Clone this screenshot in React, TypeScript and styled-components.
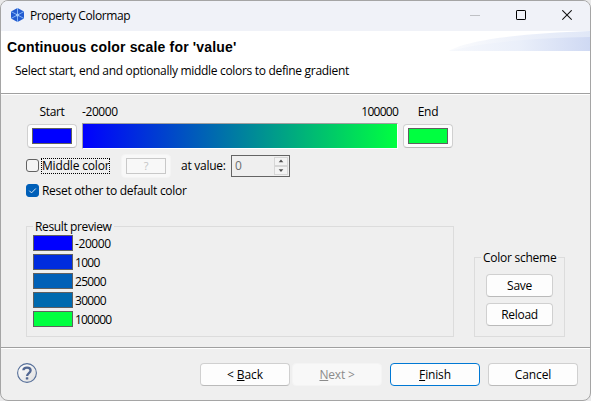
import React from "react";
import styled, { createGlobalStyle } from "styled-components";

const GlobalStyle = createGlobalStyle`
  * { box-sizing: border-box; }
  body { margin: 0; background: #e9e9ea; overflow: hidden; }
  button { padding: 0; margin: 0; }
`;

const Dialog = styled.div`
  width: 591px;
  height: 401px;
  border: 1px solid #a5a5a5;
  border-radius: 8px;
  background: #efefef;
  overflow: hidden;
  display: flex;
  flex-direction: column;
  color: #000;
  font: 12px/16px "Open Sans", "Noto Sans", sans-serif;
`;

const Label = styled.span<{ $ls?: number }>`
  display: inline-block;
  height: 16px;
  line-height: 18px;
  vertical-align: top;
  white-space: pre;
  letter-spacing: ${(p) => p.$ls ?? -0.3}px;
`;

const TitleBar = styled.div`
  height: 30px;
  flex: none;
  background: #f0f2f8;
  display: flex;
  align-items: flex-start;
  padding: 6px 0 0 9px;
`;

const TitleText = styled(Label)`
  flex: 1;
  margin-left: 5px;
`;

const WindowControls = styled.div`
  display: flex;
  gap: 36px;
  padding: 3px 18px 0 0;
  svg { display: block; }
`;

const Header = styled.header`
  position: relative;
  height: 64px;
  flex: none;
  background: #fff;
  border-bottom: 1px solid #fff;
  box-shadow: inset 0 -1px #a0a0a0;
  padding: 8px 6px 0;
`;

const Heading = styled.h1`
  margin: 0 0 7px;
  font: bold 14px/16px "Liberation Sans", Arial, sans-serif;
  letter-spacing: 0.17px;
`;

const Description = styled(Label)`
  display: block;
  margin-left: 8px;
`;

const Swoosh = styled.svg`
  position: absolute;
  top: 0;
  right: 0;
`;

const Body = styled.main`
  flex: 1;
  padding: 8px 25px 0;
`;

const ScaleGrid = styled.div`
  display: grid;
  grid-template-columns: 50px 316px 50px;
  column-gap: 5px;
  row-gap: 4px;
  align-items: start;
  text-align: center;
  margin-left: 1px;
`;

const RangeLabels = styled.div`
  display: flex;
  justify-content: space-between;
`;

const GradientBar = styled.div`
  height: 26px;
  border: 1px solid;
  border-color: #a0a0a0 #fff #fff #a0a0a0;
  background: linear-gradient(90deg, #0000ff, #00ff40);
`;

const PushButton = styled.button<{ $w: number; $default?: boolean }>`
  width: ${(p) => p.$w}px;
  height: 23px;
  padding-top: 2px;
  display: flex;
  justify-content: center;
  align-items: flex-start;
  border: 1px solid ${(p) => (p.$default ? "#0078d4" : "#d0d0d0")};
  border-bottom-color: ${(p) => (p.$default ? "#0078d4" : "#bababa")};
  border-radius: 4px;
  background: #fdfdfd;
  color: #000;
  font: inherit;
  &:disabled {
    background: #f8f8f8;
    border-color: #f4f4f4;
    color: #8b8b8b;
  }
`;

const ColorButton = styled(PushButton)`
  height: 24px;
  margin-top: 1px;
  padding-top: 3px;
  &:disabled { margin-top: 0; }
`;

const Swatch = styled.span<{ $color: string; $disabled?: boolean }>`
  width: 40px;
  height: 16px;
  flex: none;
  display: block;
  border: 1px solid ${(p) => (p.$disabled ? "#c8c8c8" : "#606060")};
  background: ${(p) => p.$color};
  color: #c4c4c4;
  line-height: 13px;
  font-size: 11px;
  text-align: center;
`;

const OptionRow = styled.div`
  display: flex;
  align-items: flex-start;
  height: 25px;
  margin: 5px 0 0 1px;
`;

const CheckBox = styled.span<{ $checked?: boolean }>`
  width: 13px;
  height: 13px;
  flex: none;
  margin: 5px 2px 0 -1px;
  border: 1px solid ${(p) => (p.$checked ? "#005fb8" : "#626262")};
  border-radius: 3px;
  background: ${(p) => (p.$checked ? "#005fb8" : "#f4f4f4")};
  svg { display: block; }
`;

const FocusLabel = styled.span`
  width: 69px;
  height: 16px;
  margin: 4px 11px 0 0;
  border: 1px dotted #000;
  display: block;
  ${Label} { margin-top: -2px; }
`;

const AtValue = styled(Label)`
  width: 50px;
  margin: 3px 0 0 10px;
`;

const Spinner = styled.div`
  width: 59px;
  height: 22px;
  margin-top: 1px;
  padding: 1px 1px 1px 3px;
  border: 1px solid #646464;
  display: flex;
  justify-content: space-between;
  color: #6d6d6d;
`;

const SpinButtons = styled.div`
  width: 14px;
  display: grid;
  grid-template-rows: 9px 9px;
  svg { display: block; border: 1px solid #d6d6d6; background: #f3f3f3; }
`;

const ResetRow = styled.div`
  display: flex;
  height: 16px;
  margin: 3px 0 0 1px;
`;

const ResetCheck = styled(CheckBox)`
  margin-top: 2px;
  margin-right: 3px;
`;

const Groups = styled.div`
  display: flex;
  justify-content: space-between;
  align-items: flex-end;
  height: 119px;
  margin-top: 20px;
`;

const Group = styled.section<{ $w: number; $h: number }>`
  width: ${(p) => p.$w}px;
  height: ${(p) => p.$h + 8}px;
  display: flex;
  flex-direction: column;
  border-bottom: 1px solid #dcdcdc;
  background:
    linear-gradient(#dcdcdc, #dcdcdc) 0 8px / 100% 1px no-repeat,
    linear-gradient(#dcdcdc, #dcdcdc) 0 8px / 1px 100% no-repeat,
    linear-gradient(#dcdcdc, #dcdcdc) 100% 8px / 1px 100% no-repeat;
`;

const GroupTitle = styled.div`
  align-self: flex-start;
  height: 16px;
  margin-left: 7px;
  padding: 0 2px;
  background: #efefef;
`;

const PreviewList = styled.div`
  display: flex;
  flex-direction: column;
  gap: 3px;
  padding: 1px 0 0 7px;
`;

const PreviewRow = styled.div`
  display: flex;
  height: 16px;
  gap: 2px;
`;

const SchemeActions = styled.div`
  display: flex;
  flex-direction: column;
  gap: 6px;
  padding: 9px 0 0 12px;
`;

const Footer = styled.footer`
  height: 53px;
  flex: none;
  border-top: 1px solid #a0a0a0;
  box-shadow: inset 0 1px #fff;
  display: flex;
  justify-content: space-between;
  align-items: flex-start;
  padding: 15px 12px 0 15px;
`;

const NavButtons = styled.div`
  display: flex;
  gap: 8px;
`;

const PagerButtons = styled.div`
  display: flex;
  gap: 2px;
`;

const AppIcon = () => (
  <svg width="15" height="16" viewBox="0 0 15 16">
    <path d="M7.5 1 14 4.5v7L7.5 15 1 11.5v-7z" fill="#235bd0" />
    <path d="M7.5 1v14M1 4.5l13 7M14 4.5l-13 7" stroke="#82b4f5" strokeWidth="1" />
    <circle cx="7.5" cy="8" r="1.5" fill="#a7cdfc" />
  </svg>
);

const HelpIcon = () => (
  <svg width="22" height="22" viewBox="0 0 22 22">
    <defs>
      <linearGradient id="help" x1="0" y1="0" x2="1" y2="1">
        <stop offset="0" stopColor="#fff" />
        <stop offset="1" stopColor="#dedede" />
      </linearGradient>
    </defs>
    <circle cx="11" cy="10" r="9.4" fill="url(#help)" stroke="#566f99" strokeWidth="1.1" />
    <path d="M7.4 7.2C7.6 3.7 14.6 3.7 14.6 7.4c0 2.6-3.5 2.7-3.5 5.6" fill="none" stroke="#526792" strokeWidth="2.3" />
    <rect x="9.8" y="14.3" width="2.5" height="2.2" rx="0.5" fill="#526792" />
  </svg>
);

const preview = [
  { color: "#0000ff", value: "-20000", ls: -0.42 },
  { color: "#002cde", value: "1000", ls: -0.7 },
  { color: "#0060b7", value: "25000", ls: -0.7 },
  { color: "#006aaf", value: "30000", ls: -0.7 },
  { color: "#00ff40", value: "100000", ls: -0.8 },
];

export default function App() {
  return (
    <>
      <GlobalStyle />
      <Dialog>
        <TitleBar>
          <AppIcon />
          <TitleText $ls={-0.38}>Property Colormap</TitleText>
          <WindowControls>
            <svg width="10" height="11"><path d="M0 5.5h10" stroke="#bfc1c5" /></svg>
            <svg width="10" height="11"><rect x=".5" y=".5" width="9" height="9" rx=".6" fill="none" stroke="#000" /></svg>
            <svg width="10" height="11"><path d="M.3.3l9.4 9.4M9.7.3.3 9.7" stroke="#111" strokeWidth="1.1" /></svg>
          </WindowControls>
        </TitleBar>
        <Header>
          <Swoosh width="141" height="20" viewBox="0 0 141 20">
            <defs>
              <linearGradient id="outer"><stop offset="0" stopColor="#fafbfd" /><stop offset="1" stopColor="#e0e7f7" /></linearGradient>
              <linearGradient id="inner"><stop offset="0" stopColor="#f6f8fc" /><stop offset=".5" stopColor="#eaeffa" /><stop offset="1" stopColor="#cfd9f3" /></linearGradient>
            </defs>
            <path d="M0 20C18 9 75 2 141 0v20z" fill="url(#outer)" />
            <path d="M0 20C30 12 80 7 141 6v14z" fill="url(#inner)" />
          </Swoosh>
          <Heading>Continuous color scale for 'value'</Heading>
          <Description $ls={-0.31}>Select start, end and optionally middle colors to define gradient</Description>
        </Header>
        <Body>
          <ScaleGrid>
            <Label>Start</Label>
            <RangeLabels>
              <Label $ls={-0.42}>-20000</Label>
              <Label $ls={-0.75}>100000</Label>
            </RangeLabels>
            <Label>End</Label>
            <ColorButton $w={50}><Swatch $color="#0000ff" /></ColorButton>
            <GradientBar />
            <ColorButton $w={50}><Swatch $color="#00ff40" /></ColorButton>
          </ScaleGrid>
          <OptionRow>
            <CheckBox />
            <FocusLabel><Label $ls={-0.17}>Middle color</Label></FocusLabel>
            <ColorButton $w={50} disabled><Swatch $color="transparent" $disabled>?</Swatch></ColorButton>
            <AtValue $ls={-0.25}>at value:</AtValue>
            <Spinner>
              <Label>0</Label>
              <SpinButtons>
                <svg width="14" height="9" viewBox="0 0 14 9"><path d="M4 5.5h6L7 2z" fill="#505050" /></svg>
                <svg width="14" height="9" viewBox="0 0 14 9"><path d="M4 3h6L7 6.5z" fill="#505050" /></svg>
              </SpinButtons>
            </Spinner>
          </OptionRow>
          <ResetRow>
            <ResetCheck $checked>
              <svg width="11" height="11"><path d="M2.3 5.7 4.5 7.9 8.8 3.5" fill="none" stroke="#dbe9f6" /></svg>
            </ResetCheck>
            <Label>Reset other to default color</Label>
          </ResetRow>
          <Groups>
            <Group $w={428} $h={111}>
              <GroupTitle><Label $ls={-0.37}>Result preview</Label></GroupTitle>
              <PreviewList>
                {preview.map((row) => (
                  <PreviewRow key={row.value}>
                    <Swatch $color={row.color} />
                    <Label $ls={row.ls}>{row.value}</Label>
                  </PreviewRow>
                ))}
              </PreviewList>
            </Group>
            <Group $w={91} $h={80}>
              <GroupTitle><Label $ls={-0.25}>Color scheme</Label></GroupTitle>
              <SchemeActions>
                <PushButton $w={67}><Label $ls={-0.3}>Save</Label></PushButton>
                <PushButton $w={67}><Label>Reload</Label></PushButton>
              </SchemeActions>
            </Group>
          </Groups>
        </Body>
        <Footer>
          <HelpIcon />
          <NavButtons>
            <PagerButtons>
              <PushButton $w={90}><Label $ls={-0.1}>&lt; <u>B</u>ack</Label></PushButton>
              <PushButton $w={90} disabled><Label $ls={-0.2}><u>N</u>ext &gt;</Label></PushButton>
            </PagerButtons>
            <PushButton $w={90} $default><Label $ls={-0.15}><u>F</u>inish</Label></PushButton>
            <PushButton $w={90}><Label $ls={-0.1}>Cancel</Label></PushButton>
          </NavButtons>
        </Footer>
      </Dialog>
    </>
  );
}
